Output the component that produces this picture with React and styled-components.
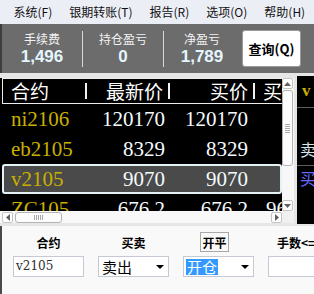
import React from 'react'
import styled, { createGlobalStyle, css } from 'styled-components'

const GlobalStyle = createGlobalStyle`
  html, body {
    margin: 0;
    padding: 0;
  }
  body {
    width: 314px;
    height: 294px;
    overflow: hidden;
    background: #e6e6e6;
    font-family: "Noto Sans CJK SC", sans-serif;
  }
`

const menus = ['系统(F)', '银期转账(T)', '报告(R)', '选项(O)', '帮助(H)']

const stats = [
  { label: '手续费', value: '1,496', width: 80 },
  { label: '持仓盈亏', value: '0', width: 80 },
  { label: '净盈亏', value: '1,789', width: 76 },
]

const rows = [
  { name: 'ni2106', last: '120170', bid: '120170', vol: '' },
  { name: 'eb2105', last: '8329', bid: '8329', vol: '' },
  { name: 'v2105', last: '9070', bid: '9070', vol: '', selected: true },
  { name: 'ZC105', last: '676.2', bid: '676.2', vol: '96' },
]

export default function App() {
  return (
    <Window>
      <GlobalStyle />
      <MenuBar>
        {menus.map((m) => (
          <MenuItem key={m}>{m}</MenuItem>
        ))}
      </MenuBar>

      <StatsPanel>
        {stats.map((s, i) => (
          <React.Fragment key={s.label}>
            {i > 0 && <StatDivider />}
            <Stat $width={s.width}>
              <StatLabel>{s.label}</StatLabel>
              <StatValue>{s.value}</StatValue>
            </Stat>
          </React.Fragment>
        ))}
        <QueryButton>查询(Q)</QueryButton>
      </StatsPanel>

      <Middle>
        <TableArea>
          <TableBody>
            <Table>
              <HeaderRow>
                <HeadCell $left>
                  合约<HeadSep />
                </HeadCell>
                <HeadCell>
                  最新价<HeadSep />
                </HeadCell>
                <HeadCell>
                  买价<HeadSep />
                </HeadCell>
                <HeadCell $left>买</HeadCell>
              </HeaderRow>
              {rows.map((r) => (
                <DataRow key={r.name} $selected={r.selected}>
                  <NameCell>{r.name}</NameCell>
                  <NumCell $pad={6}>{r.last}</NumCell>
                  <NumCell $pad={8}>{r.bid}</NumCell>
                  <VolCell>{r.vol}</VolCell>
                </DataRow>
              ))}
            </Table>
            <VScroll>
              <ArrowBtn>
                <svg width="7" height="4" viewBox="0 0 7 4">
                  <path d="M0 4 L3.5 0 L7 4 Z" fill="#606060" />
                </svg>
              </ArrowBtn>
              <VThumb>
                <Grip $vertical />
              </VThumb>
              <Spacer />
              <ArrowBtn>
                <svg width="7" height="4" viewBox="0 0 7 4">
                  <path d="M0 0 L3.5 4 L7 0 Z" fill="#606060" />
                </svg>
              </ArrowBtn>
            </VScroll>
          </TableBody>
          <HScrollRow>
            <HScroll>
              <ArrowBtn>
                <svg width="4" height="7" viewBox="0 0 4 7">
                  <path d="M4 0 L0 3.5 L4 7 Z" fill="#606060" />
                </svg>
              </ArrowBtn>
              <HThumb>
                <Grip />
              </HThumb>
              <Spacer />
              <ArrowBtn>
                <svg width="4" height="7" viewBox="0 0 4 7">
                  <path d="M0 0 L4 3.5 L0 7 Z" fill="#606060" />
                </svg>
              </ArrowBtn>
            </HScroll>
            <Corner />
          </HScrollRow>
        </TableArea>

        <SidePanel>
          <SideTop>v</SideTop>
          <SideMid>卖</SideMid>
          <SideBottom>买</SideBottom>
        </SidePanel>
      </Middle>

      <OrderForm>
        <FormRow>
          <FieldLabel>合约</FieldLabel>
          <FieldLabel>买卖</FieldLabel>
          <FieldLabel>
            <BoxedLabel>开平</BoxedLabel>
          </FieldLabel>
          <FieldLabel $start>手数&lt;=</FieldLabel>
        </FormRow>
        <FormRow $inputs>
          <TextBox>v2105</TextBox>
          <DropBox>
            <DropText>卖出</DropText>
            <DropArrow />
          </DropBox>
          <DropBox>
            <DropText $selected>开仓</DropText>
            <DropArrow />
          </DropBox>
          <TextBox />
        </FormRow>
      </OrderForm>
    </Window>
  )
}

const Window = styled.div`
  width: 314px;
  height: 294px;
  display: flex;
  flex-direction: column;
  overflow: hidden;
  background: #e6e6e6;
`

const MenuBar = styled.div`
  height: 24px;
  flex-shrink: 0;
  display: flex;
  align-items: center;
  padding-left: 5px;
  background: #eceef6;
  font-size: 12px;
  color: #111;
`

const MenuItem = styled.span`
  padding: 0 8.5px;
  line-height: 16px;
  white-space: nowrap;
`

const StatsPanel = styled.div`
  height: 49px;
  flex-shrink: 0;
  display: flex;
  align-items: center;
  background: #6c6c6c;
  border-left: 2px solid #3e3e3e;
`

const Stat = styled.div`
  width: ${(p) => p.$width}px;
  display: flex;
  flex-direction: column;
  align-items: center;
`

const StatLabel = styled.div`
  font-size: 12px;
  line-height: 16px;
  color: #f2f2f2;
`

const StatValue = styled.div`
  font-family: "Liberation Sans", Arial, sans-serif;
  font-weight: bold;
  font-size: 17px;
  line-height: 20px;
  color: #e4f6ff;
`

const StatDivider = styled.div`
  width: 1px;
  height: 36px;
  background: #d8d8d8;
`

const QueryButton = styled.div`
  width: 59px;
  height: 37px;
  margin-left: 2px;
  box-sizing: border-box;
  display: flex;
  align-items: center;
  justify-content: center;
  background: #fff;
  border: 1px solid #9a9a9a;
  border-radius: 3px;
  font-size: 13px;
  font-weight: bold;
  color: #000;
  white-space: nowrap;
`

const Middle = styled.div`
  height: 153px;
  flex-shrink: 0;
  display: flex;
`

const TableArea = styled.div`
  width: 294px;
  padding-top: 5px;
  display: flex;
  flex-direction: column;
`

const TableBody = styled.div`
  height: 133px;
  display: flex;
`

const Table = styled.div`
  width: 282px;
  background: #000;
  overflow: hidden;
`

const columns = css`
  display: grid;
  grid-template-columns: 84px 83px 85px 60px;
  margin-left: 2px;
  box-sizing: border-box;
`

const HeaderRow = styled.div`
  ${columns}
  height: 26px;
  border: 1px solid #ececec;
  border-right: none;
  font-size: 19px;
  color: #fff;
`

const HeadCell = styled.div`
  display: flex;
  align-items: center;
  justify-content: ${(p) => (p.$left ? 'space-between' : 'flex-end')};
  gap: 5px;
  padding-left: ${(p) => (p.$left ? '8px' : '0')};
  white-space: nowrap;
  line-height: 22px;
`

const HeadSep = styled.span`
  width: 2px;
  height: 16px;
  background: #f2f2f2;
`

const DataRow = styled.div`
  ${columns}
  height: 30px;
  border: 2px solid ${(p) => (p.$selected ? '#e4f2f6' : 'transparent')};
  border-radius: 3px;
  background: ${(p) => (p.$selected ? '#4a4a4a' : 'transparent')};
  font-family: "Liberation Serif", "Times New Roman", serif;
  font-size: 21px;
  align-items: center;
  white-space: nowrap;
`

const NameCell = styled.div`
  padding-left: 7px;
  color: #c8b000;
  line-height: 26px;
`

const NumCell = styled.div`
  text-align: right;
  padding-right: ${(p) => p.$pad}px;
  color: #f4fbff;
  line-height: 26px;
`

const VolCell = styled.div`
  padding-left: 10px;
  color: #f4fbff;
  line-height: 26px;
`

const VScroll = styled.div`
  width: 12px;
  display: flex;
  flex-direction: column;
  background: #f7f7f7;
`

const ArrowBtn = styled.div`
  width: 11px;
  height: 11px;
  flex-shrink: 0;
  box-sizing: border-box;
  display: flex;
  align-items: center;
  justify-content: center;
  background: #fff;
  border: 1px solid #c4c4c4;
  border-radius: 2px;
`

const VThumb = styled.div`
  width: 11px;
  height: 76px;
  margin-top: 1px;
  box-sizing: border-box;
  display: flex;
  align-items: center;
  justify-content: center;
  background: #fcfcfc;
  border: 1px solid #b4b4b4;
  border-radius: 3px;
`

const HThumb = styled.div`
  width: 47px;
  height: 11px;
  margin-left: 2px;
  box-sizing: border-box;
  display: flex;
  align-items: center;
  justify-content: center;
  background: #fcfcfc;
  border: 1px solid #b4b4b4;
  border-radius: 3px;
`

const Grip = styled.div`
  width: ${(p) => (p.$vertical ? '5px' : '9px')};
  height: ${(p) => (p.$vertical ? '9px' : '5px')};
  background: ${(p) =>
    p.$vertical
      ? 'repeating-linear-gradient(to bottom, #a8a8a8 0 1px, transparent 1px 2px)'
      : 'repeating-linear-gradient(to right, #a8a8a8 0 1px, transparent 1px 2px)'};
`

const Spacer = styled.div`
  flex: 1;
`

const HScrollRow = styled.div`
  height: 12px;
  display: flex;
`

const HScroll = styled.div`
  width: 280px;
  padding-left: 2px;
  display: flex;
  align-items: center;
  background: #f8f8f8;
`

const Corner = styled.div`
  width: 12px;
  background: #f0f0f0;
`

const SidePanel = styled.div`
  width: 17px;
  margin: 3px 0 2px 3px;
  background: #000;
  display: flex;
  flex-direction: column;
  overflow: hidden;
  white-space: nowrap;
`

const SideTop = styled.div`
  height: 31px;
  padding-left: 5px;
  border-bottom: 1px solid #5e5e5e;
  font-family: "Liberation Serif", serif;
  font-weight: bold;
  font-size: 17px;
  line-height: 30px;
  color: #c8b000;
`

const SideMid = styled.div`
  height: 58px;
  box-sizing: border-box;
  padding: 31px 0 0 3px;
  border-bottom: 1px solid #5e5e5e;
  font-size: 16px;
  line-height: 20px;
  color: #d6e4ec;
`

const SideBottom = styled.div`
  padding: 2px 0 0 3px;
  font-size: 16px;
  line-height: 20px;
  color: #6868ff;
`

const OrderForm = styled.div`
  flex: 1;
  background: #f9f9f9;
  border-left: 2px solid #4a4a4a;
  padding: 6px 0 0 11px;
`

const FormRow = styled.div`
  display: grid;
  grid-template-columns: repeat(4, 71px);
  column-gap: 14px;
  height: ${(p) => (p.$inputs ? '21px' : '20px')};
  margin-top: ${(p) => (p.$inputs ? '4px' : '0')};
`

const FieldLabel = styled.div`
  display: flex;
  align-items: center;
  justify-content: ${(p) => (p.$start ? 'flex-start' : 'center')};
  padding-left: ${(p) => (p.$start ? '9px' : '0')};
  font-size: 12px;
  font-weight: bold;
  color: #000;
  white-space: nowrap;
`

const BoxedLabel = styled.span`
  height: 20px;
  box-sizing: border-box;
  margin-right: 8px;
  padding: 0 1px;
  display: flex;
  align-items: center;
  border: 1px solid #a8a8a8;
`

const TextBox = styled.div`
  box-sizing: border-box;
  padding-left: 2px;
  background: #fff;
  border: 1px solid #c6c9d4;
  font-family: "DejaVu Serif", serif;
  font-size: 12px;
  line-height: 19px;
  color: #2e2e2e;
`

const DropBox = styled.div`
  box-sizing: border-box;
  display: flex;
  align-items: center;
  justify-content: space-between;
  padding: 0 4px 0 2px;
  background: #fff;
  border: 1px solid #c6c9d4;
`

const DropText = styled.span`
  font-size: 15px;
  line-height: 16px;
  padding: 0 1px;
  color: ${(p) => (p.$selected ? '#fff' : '#000')};
  background: ${(p) => (p.$selected ? '#3399ff' : 'transparent')};
`

const DropArrow = styled.span`
  width: 0;
  height: 0;
  border-left: 4px solid transparent;
  border-right: 4px solid transparent;
  border-top: 4px solid #000;
`
